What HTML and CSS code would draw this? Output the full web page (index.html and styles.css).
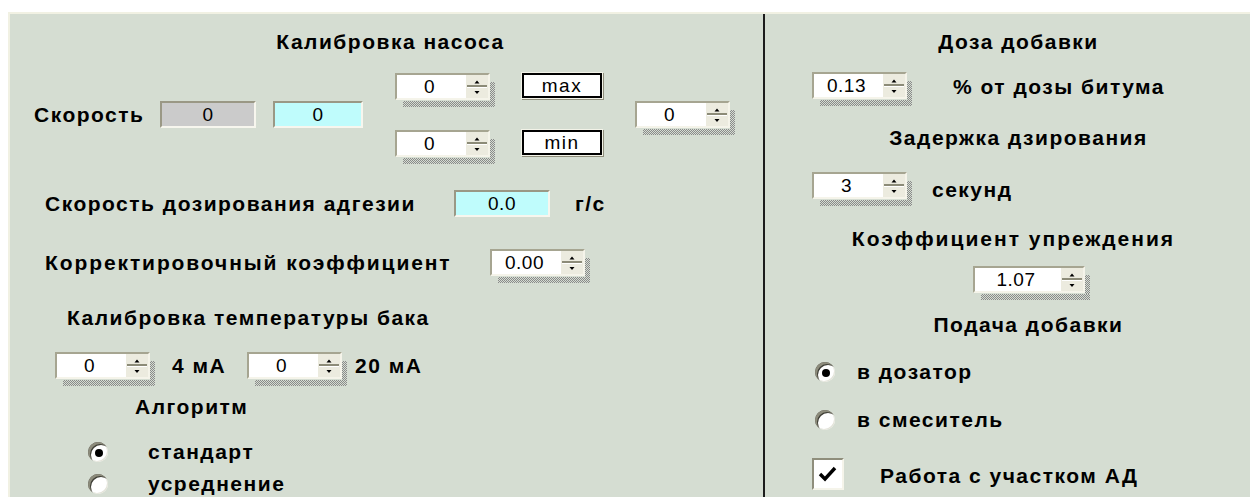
FILE: index.html
```html
<!DOCTYPE html>
<html lang="ru">
<head>
<meta charset="utf-8">
<title>Калибровка насоса</title>
<link rel="stylesheet" href="styles.css">
</head>
<body>
<div class="panel">
  <section class="col col-left">
    <div class="row title-row"><span class="title">Калибровка насоса</span></div>

    <div class="row speed-row">
      <div class="speed-main">
        <span class="lbl speed-lbl">Скорость</span>
        <span class="readout gray w96">0</span>
        <span class="readout cyan w90">0</span>
      </div>
      <div class="limits">
        <div class="limit-line">
          <div class="spin w95"><div class="spin-field"><span class="val">0</span><svg class="arrows" width="22" height="23" viewBox="0 0 22 23"><rect width="22" height="23" fill="#ecebdf"/><path d="M8.5 8.5h5l-2.5-3z" fill="#000"/><rect x="1" y="10" width="20" height="2" fill="#8c8b78"/><rect x="1" y="12" width="20" height="1" fill="#fff"/><path d="M8.5 16h5l-2.5 3z" fill="#000"/></svg></div></div>
          <span class="btn">max</span>
        </div>
        <div class="limit-line">
          <div class="spin w95"><div class="spin-field"><span class="val">0</span><svg class="arrows" width="22" height="23" viewBox="0 0 22 23"><rect width="22" height="23" fill="#ecebdf"/><path d="M8.5 8.5h5l-2.5-3z" fill="#000"/><rect x="1" y="10" width="20" height="2" fill="#8c8b78"/><rect x="1" y="12" width="20" height="1" fill="#fff"/><path d="M8.5 16h5l-2.5 3z" fill="#000"/></svg></div></div>
          <span class="btn">min</span>
        </div>
      </div>
      <div class="spin w95 offset-spin"><div class="spin-field"><span class="val">0</span><svg class="arrows" width="22" height="23" viewBox="0 0 22 23"><rect width="22" height="23" fill="#ecebdf"/><path d="M8.5 8.5h5l-2.5-3z" fill="#000"/><rect x="1" y="10" width="20" height="2" fill="#8c8b78"/><rect x="1" y="12" width="20" height="1" fill="#fff"/><path d="M8.5 16h5l-2.5 3z" fill="#000"/></svg></div></div>
    </div>

    <div class="row adh-row">
      <span class="lbl adh-lbl">Скорость дозирования адгезии</span>
      <span class="readout cyan w96">0.0</span>
      <span class="lbl unit">г/с</span>
    </div>

    <div class="row coef-row">
      <span class="lbl coef-lbl">Корректировочный коэффициент</span>
      <div class="spin w95"><div class="spin-field"><span class="val">0.00</span><svg class="arrows" width="22" height="23" viewBox="0 0 22 23"><rect width="22" height="23" fill="#ecebdf"/><path d="M8.5 8.5h5l-2.5-3z" fill="#000"/><rect x="1" y="10" width="20" height="2" fill="#8c8b78"/><rect x="1" y="12" width="20" height="1" fill="#fff"/><path d="M8.5 16h5l-2.5 3z" fill="#000"/></svg></div></div>
    </div>

    <div class="row temp-title"><span class="lbl">Калибровка температуры бака</span></div>

    <div class="row temp-row">
      <div class="spin w95"><div class="spin-field"><span class="val">0</span><svg class="arrows" width="22" height="23" viewBox="0 0 22 23"><rect width="22" height="23" fill="#ecebdf"/><path d="M8.5 8.5h5l-2.5-3z" fill="#000"/><rect x="1" y="10" width="20" height="2" fill="#8c8b78"/><rect x="1" y="12" width="20" height="1" fill="#fff"/><path d="M8.5 16h5l-2.5 3z" fill="#000"/></svg></div></div>
      <span class="lbl ma4">4 мА</span>
      <div class="spin w95"><div class="spin-field"><span class="val">0</span><svg class="arrows" width="22" height="23" viewBox="0 0 22 23"><rect width="22" height="23" fill="#ecebdf"/><path d="M8.5 8.5h5l-2.5-3z" fill="#000"/><rect x="1" y="10" width="20" height="2" fill="#8c8b78"/><rect x="1" y="12" width="20" height="1" fill="#fff"/><path d="M8.5 16h5l-2.5 3z" fill="#000"/></svg></div></div>
      <span class="lbl ma20">20 мА</span>
    </div>

    <div class="row algo-title"><span class="lbl">Алгоритм</span></div>

    <div class="row radio-row algo-1"><span class="radio on"></span><span class="lbl">стандарт</span></div>
    <div class="row radio-row algo-2"><span class="radio"></span><span class="lbl">усреднение</span></div>
  </section>

  <div class="divider"></div>

  <section class="col col-right">
    <div class="row title-row center"><span class="title">Доза добавки</span></div>

    <div class="row dose-row">
      <div class="spin w95"><div class="spin-field"><span class="val">0.13</span><svg class="arrows" width="22" height="23" viewBox="0 0 22 23"><rect width="22" height="23" fill="#ecebdf"/><path d="M8.5 8.5h5l-2.5-3z" fill="#000"/><rect x="1" y="10" width="20" height="2" fill="#8c8b78"/><rect x="1" y="12" width="20" height="1" fill="#fff"/><path d="M8.5 16h5l-2.5 3z" fill="#000"/></svg></div></div>
      <span class="lbl dose-lbl">% от дозы битума</span>
    </div>

    <div class="row center delay-title"><span class="lbl">Задержка дзирования</span></div>

    <div class="row delay-row">
      <div class="spin w95"><div class="spin-field"><span class="val">3</span><svg class="arrows" width="22" height="23" viewBox="0 0 22 23"><rect width="22" height="23" fill="#ecebdf"/><path d="M8.5 8.5h5l-2.5-3z" fill="#000"/><rect x="1" y="10" width="20" height="2" fill="#8c8b78"/><rect x="1" y="12" width="20" height="1" fill="#fff"/><path d="M8.5 16h5l-2.5 3z" fill="#000"/></svg></div></div>
      <span class="lbl sec-lbl">секунд</span>
    </div>

    <div class="row center lead-title"><span class="lbl">Коэффициент упреждения</span></div>

    <div class="row lead-row">
      <div class="spin w110"><div class="spin-field"><span class="val">1.07</span><svg class="arrows" width="22" height="23" viewBox="0 0 22 23"><rect width="22" height="23" fill="#ecebdf"/><path d="M8.5 8.5h5l-2.5-3z" fill="#000"/><rect x="1" y="10" width="20" height="2" fill="#8c8b78"/><rect x="1" y="12" width="20" height="1" fill="#fff"/><path d="M8.5 16h5l-2.5 3z" fill="#000"/></svg></div></div>
    </div>

    <div class="row center feed-title"><span class="lbl">Подача добавки</span></div>

    <div class="row radio-row feed-1"><span class="radio on"></span><span class="lbl">в дозатор</span></div>
    <div class="row radio-row feed-2"><span class="radio"></span><span class="lbl">в смеситель</span></div>

    <div class="row check-row">
      <span class="check"><svg width="20" height="16" viewBox="0 0 20 16"><path d="M2 8l5 5 10-11" fill="none" stroke="#000" stroke-width="3.4"/></svg></span>
      <span class="lbl">Работа с участком АД</span>
    </div>
  </section>
</div>
</body>
</html>
```

FILE: styles.css
```css
* { box-sizing: border-box; }

body {
  margin: 0;
  background: #ffffff;
  font-family: "Liberation Sans", Arial, sans-serif;
  color: #000;
}

/* main form panel */
.panel {
  margin: 12px 0 0 8px;
  height: 485px;
  background: #d5ddd2;
  border-top: 2px solid #f1f1e3;
  border-left: 2px solid #f1f1e3;
  display: grid;
  grid-template-columns: 753px 2px 1fr;
  overflow: hidden;
}

.divider { background: #1c1c1c; }

.col {
  display: flex;
  flex-direction: column;
}

.row {
  display: flex;
  align-items: center;
  flex: none;
}

.center { justify-content: center; }

.title, .lbl {
  font-weight: bold;
  font-size: 21px;
  line-height: 22px;
  letter-spacing: 1.5px;
  white-space: nowrap;
}

/* ---------- left column ---------- */
.col-left .title-row {
  justify-content: center;
  height: 24px;
  margin-top: 16px;
  padding-left: 8px;
}

.speed-row {
  align-items: flex-start;
  margin-top: 19px;
  padding-left: 24px;
}

.speed-main {
  display: flex;
  align-items: center;
  margin-top: 28px;
}
.speed-lbl { width: 126px; }
.speed-main .readout + .readout { margin-left: 17px; }

.limits {
  margin-left: 32px;
  display: flex;
  flex-direction: column;
  gap: 23px;
}
.limit-line {
  display: flex;
  align-items: flex-start;
  gap: 27px;
}
.offset-spin { margin-left: 33px; margin-top: 28px; }

.adh-row { margin-top: 26px; padding-left: 35px; height: 27px; }
.adh-lbl { width: 409px; }
.unit { margin-left: 25px; }

.coef-row { margin-top: 32px; padding-left: 35px; align-items: flex-start; }
.coef-lbl { width: 445px; margin-top: 3px; letter-spacing: 1.9px; }

.temp-title { margin-top: 24px; padding-left: 57px; height: 22px; }

.temp-row { margin-top: 23px; padding-left: 45px; align-items: flex-start; }
.temp-row .lbl { margin-top: 3px; }
.ma4 { margin-left: 17px; width: 75px; }
.ma20 { margin-left: 8px; }

.algo-title { margin-top: 10px; padding-left: 125px; height: 22px; }

.radio-row { height: 20px; }
.algo-1 { margin-top: 24px; padding-left: 78px; }
.algo-2 { margin-top: 12px; padding-left: 78px; }
.algo-1 .radio, .algo-2 .radio { margin-right: 40px; }

/* ---------- right column ---------- */
.col-right { padding-left: 22px; }
.col-right .title-row { height: 24px; margin-top: 16px; }

.dose-row { margin-top: 18px; padding-left: 25px; align-items: flex-start; }
.dose-lbl { margin-left: 41px; margin-top: 4px; }

.delay-title { margin-top: 21px; height: 22px; }

.delay-row { margin-top: 23px; padding-left: 25px; align-items: flex-start; }
.sec-lbl { margin-left: 20px; margin-top: 7px; }

.lead-title { margin-top: 22px; height: 22px; padding-right: 10px; }
.lead-title .lbl { letter-spacing: 2px; }

.lead-row { margin-top: 16px; padding-left: 186px; }

.feed-title { margin-top: 14px; height: 22px; padding-left: 20px; }

.feed-1 { margin-top: 26px; padding-left: 28px; }
.feed-2 { margin-top: 28px; padding-left: 28px; }
.feed-1 .radio, .feed-2 .radio { margin-right: 22px; }

.check-row { margin-top: 28px; padding-left: 25px; }
.check-row .lbl { margin-left: 36px; margin-top: 4px; }

/* ---------- controls ---------- */
.readout {
  display: inline-flex;
  align-items: center;
  justify-content: center;
  height: 27px;
  font-size: 19px;
  letter-spacing: 0.5px;
  border-top: 2px solid #9a9885;
  border-left: 2px solid #9a9885;
  border-right: 2px solid #f7f6ee;
  border-bottom: 2px solid #f7f6ee;
  flex: none;
}
.gray { background: #cbcbcb; }
.cyan { background: #bffcfc; }
.w96 { width: 96px; }
.w90 { width: 90px; }

/* spin box with hatched drop shadow */
.spin {
  position: relative;
  padding: 0 5px 7px 0;
  flex: none;
}
.spin::before,
.spin::after {
  content: "";
  position: absolute;
  background: repeating-conic-gradient(#8a8a8a 0 25%, #d5ddd2 0 50%) 0 0 / 2px 2px;
}
.spin::before { right: 0; top: 9px; width: 5px; bottom: 0; }
.spin::after { left: 8px; bottom: 0; height: 6px; right: 0; }

.w95 .spin-field { width: 95px; }
.w110 .spin-field { width: 112px; }

.spin-field {
  height: 27px;
  display: flex;
  align-items: stretch;
  background: #fff;
  border-top: 2px solid #a6a591;
  border-left: 2px solid #a6a591;
  border-right: 2px solid #f5f4ea;
  border-bottom: 2px solid #f5f4ea;
}
.spin-field .val {
  flex: 1;
  text-align: center;
  font-size: 19px;
  line-height: 23px;
  letter-spacing: 0.5px;
  padding-right: 4px;
}
.arrows { display: block; flex: none; }

.btn {
  width: 80px;
  height: 25px;
  display: flex;
  align-items: center;
  justify-content: center;
  background: #fff;
  border: 2px solid #000;
  outline: 1px solid #f3f3e8;
  box-shadow: 1px 1px 0 1px #8f8e7c;
  font-size: 19px;
  letter-spacing: 1.5px;
  flex: none;
}

.radio {
  width: 20px;
  height: 20px;
  border-radius: 50%;
  background: #fff;
  flex: none;
  box-shadow: inset 2px 2px 0 #8c8b7b, inset 3px 3px 0 #3e3e36, inset -1px -1px 0 #e4e4da;
  display: flex;
  align-items: center;
  justify-content: center;
}
.radio.on::after {
  content: "";
  width: 8px;
  height: 8px;
  margin: 1px 0 0 1px;
  border-radius: 50%;
  background: #000;
}

.check {
  width: 32px;
  height: 32px;
  background: #fff;
  border-top: 2px solid #8f8e7c;
  border-left: 2px solid #8f8e7c;
  border-right: 2px solid #f5f4ea;
  border-bottom: 2px solid #f5f4ea;
  display: flex;
  align-items: center;
  justify-content: center;
  flex: none;
}
```
